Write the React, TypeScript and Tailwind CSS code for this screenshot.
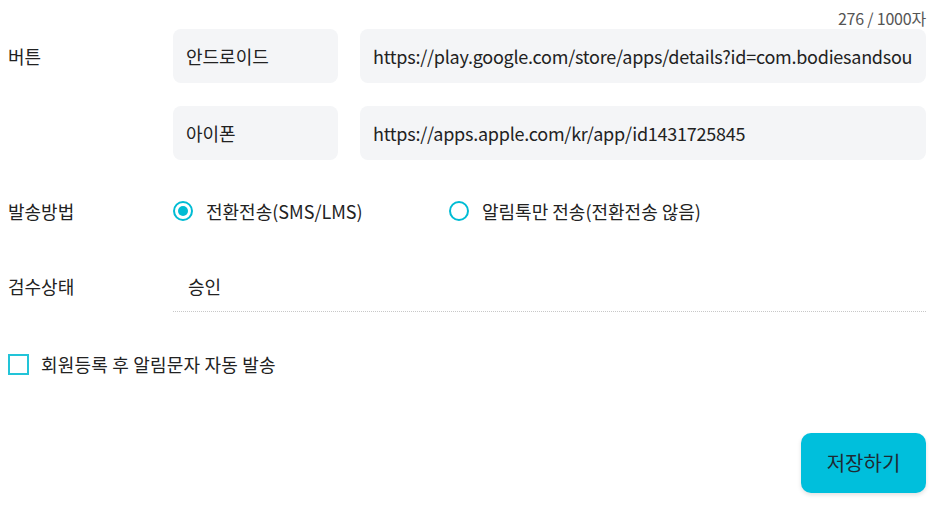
import React, { useState } from 'react';

const font = "font-['Noto_Sans_CJK_KR','Noto_Sans',sans-serif]";

const App: React.FC = () => {
  const [method, setMethod] = useState('sms');
  const [autoSend, setAutoSend] = useState(false);

  return (
    <div className={`${font} w-[951px] h-[516px] bg-white text-[#222] overflow-hidden`}>
      <div className="pl-2 pr-[25px]">
        <div className="h-[29px] flex items-center justify-end text-[16px] text-[#555] tracking-[-0.2px] pt-[7px]">
          276 / 1000자
        </div>

        {/* 버튼 */}
        <div className="flex">
          <div className="w-[165px] h-[54px] flex items-center text-[18px]">버튼</div>
          <div className="flex-1 flex flex-col gap-[23px]">
            <div className="flex gap-[22px]">
              <div className="w-[165px] h-[54px] rounded-lg bg-[#f4f5f7] flex items-center px-[13px] text-[18px]">
                안드로이드
              </div>
              <div className="flex-1 h-[54px] rounded-lg bg-[#f4f5f7] flex items-center px-[13px] text-[18px] tracking-[-0.25px] overflow-hidden whitespace-nowrap">
                https://play.google.com/store/apps/details?id=com.bodiesandsou
              </div>
            </div>
            <div className="flex gap-[22px]">
              <div className="w-[165px] h-[54px] rounded-lg bg-[#f4f5f7] flex items-center px-[13px] text-[18px]">
                아이폰
              </div>
              <div className="flex-1 h-[54px] rounded-lg bg-[#f4f5f7] flex items-center px-[13px] text-[18px] tracking-[-0.25px] overflow-hidden whitespace-nowrap">
                https://apps.apple.com/kr/app/id1431725845
              </div>
            </div>
          </div>
        </div>

        {/* 발송방법 */}
        <div className="flex items-center h-[50px] mt-[26px]">
          <div className="w-[165px] text-[18px]">발송방법</div>
          <label className="flex items-center gap-[13px] w-[276px] cursor-pointer" onClick={() => setMethod('sms')}>
            <span className="w-5 h-5 rounded-full border-2 border-[#00bcd4] flex items-center justify-center">
              {method === 'sms' && <span className="w-[10px] h-[10px] rounded-full bg-[#00bcd4]" />}
            </span>
            <span className="text-[18px]">전환전송(SMS/LMS)</span>
          </label>
          <label className="flex items-center gap-[13px] cursor-pointer" onClick={() => setMethod('alim')}>
            <span className="w-5 h-5 rounded-full border-2 border-[#00bcd4] flex items-center justify-center">
              {method === 'alim' && <span className="w-[10px] h-[10px] rounded-full bg-[#00bcd4]" />}
            </span>
            <span className="text-[18px]">알림톡만 전송(전환전송 않음)</span>
          </label>
        </div>

        {/* 검수상태 */}
        <div className="flex mt-[25px]">
          <div className="w-[165px] h-[51px] flex items-center text-[18px]">검수상태</div>
          <div className="flex-1 h-[51px] flex items-center pl-[15px] text-[18px] border-b border-dotted border-[#c8c8c8]">
            승인
          </div>
        </div>

        {/* 자동 발송 */}
        <label className="flex items-center gap-3 mt-[39px] cursor-pointer" onClick={() => setAutoSend(!autoSend)}>
          <span className="w-[21px] h-[21px] border-2 border-[#22c4d8] flex items-center justify-center">
            {autoSend && <span className="w-[11px] h-[11px] bg-[#00bcd4]" />}
          </span>
          <span className="text-[18px] tracking-[0.2px]">회원등록 후 알림문자 자동 발송</span>
        </label>

        <div className="flex justify-end mt-[55px]">
          <button className="w-[125px] h-[60px] rounded-[10px] bg-[#00bfdc] text-[#1e2a33] text-[20px] shadow-[0_2px_4px_rgba(0,0,0,0.12)]">
            저장하기
          </button>
        </div>
      </div>
    </div>
  );
};

export default App;
